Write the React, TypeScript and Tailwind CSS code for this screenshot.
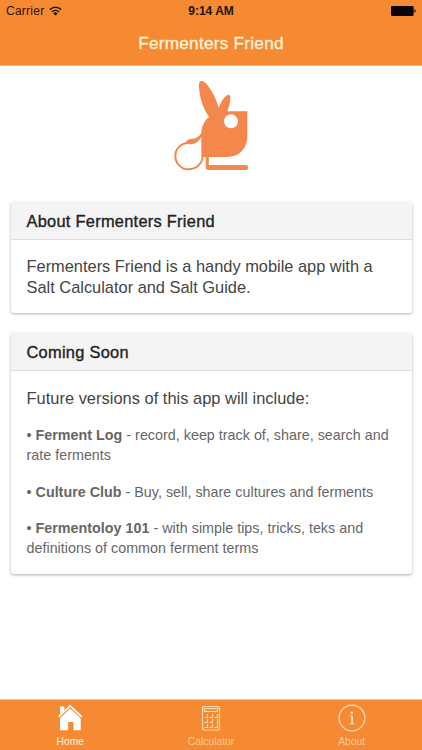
import type { ReactNode } from "react";

function WifiIcon() {
  return (
    <svg className="h-[10px] w-[13px]" viewBox="0 0 13 10" fill="none" aria-hidden="true">
      <path d="M.8 3.6a8.2 8.2 0 0 1 11.4 0" stroke="#1f1208" strokeWidth="1.5" />
      <path d="M2.9 5.9a5.2 5.2 0 0 1 7.2 0" stroke="#1f1208" strokeWidth="1.4" />
      <path d="M6.5 9.6 4.3 7.4a3.2 3.2 0 0 1 4.4 0Z" fill="#1f1208" />
    </svg>
  );
}

function BatteryIcon() {
  return (
    <svg className="h-[10px] w-[25px]" viewBox="0 0 25 10" fill="#0b0603" aria-hidden="true">
      <rect width="22.6" height="10" rx="1.2" />
      <path d="M23.3 3.3c1.8.3 1.8 3.1 0 3.4Z" />
    </svg>
  );
}

function Logo() {
  return (
    <svg className="h-[105px] w-[100px]" viewBox="0 0 300 315" fill="none" aria-hidden="true">
      <g fill="#f4874b">
        <path d="M122 28c7-3 15 4 23 15 14 19 25 42 31 65 5-15 13-29 23-37 8-6 13-2 12 8-1 14-4 27-9 39h60v75c0 38-25 62-61 62h-77v-69c0-21 8-39 23-51-14-22-25-47-28-73-2-13-4-31 2-34Z" />
        <path d="M127 178c-5 10-11 17-20 21-8 2-21 1-28 8-1 4 1 8 5 9 12 2 22 0 30-8 6-6 10-12 13-19Z" />
      </g>
      <path
        d="M84 213c-22 1-38 17-38 39 0 22 17 40 39 40s42-15 43-40"
        stroke="#f4874b"
        strokeWidth="6"
      />
      <path d="M142 253v33" stroke="#f4874b" strokeWidth="9" />
      <path d="M137.500 279H257a7 7 0 0 1 0 15H146q-8.500 0-8.500-8Z" fill="#f4874b" />
      <circle cx="213" cy="148" r="21" fill="#fff" />
    </svg>
  );
}

function HomeIcon() {
  return (
    <svg className="h-7 w-7" viewBox="0 0 28 28" aria-hidden="true">
      <path d="M4 10V2.500h4.300V6.500Z" fill="#fff" />
      <path d="m2.500 12.800 11.700-11 11.700 11" stroke="#fff" strokeWidth="1.700" fill="none" />
      <path d="M14.200 4.600 24.700 14.300v11.900h-7.200v-8.200h-5.400v8.200H4V14.300Z" fill="#fff" />
    </svg>
  );
}

function CalculatorIcon() {
  return (
    <svg className="h-7 w-7" viewBox="0 0 28 28" fill="none" stroke="#fcd8ad" aria-hidden="true">
      <rect x="5.500" y="2.500" width="17" height="23.500" rx="1.400" strokeWidth="1.200" />
      <rect x="7.500" y="4.500" width="13" height="3" strokeWidth="1.100" />
      <path
        d="M7.500 13.500h3v-3.500M12.500 13.500h3v-3.500M17.500 13.500h3v-3.500M7.500 18.500h3v-3.500M12.500 18.500h3v-3.500M7.500 23.500h3v-3.500M12.500 23.500h3v-3.500M17.500 23.500h3v-8.500"
        strokeWidth="1.100"
      />
    </svg>
  );
}

function AboutIcon() {
  return (
    <svg className="h-7 w-7" viewBox="0 0 28 28" fill="none" aria-hidden="true">
      <circle cx="14" cy="14" r="12.900" stroke="#fde3c4" strokeWidth="1.100" />
      <circle cx="13.800" cy="8.900" r="1.300" fill="#fde3c4" />
      <path d="M11.900 12h2.100v7.700M11.700 19.800h4.500" stroke="#fde3c4" strokeWidth="1" />
      <path d="M14 12v7.700" stroke="#fde3c4" strokeWidth="1.800" />
    </svg>
  );
}

function Card({ title, children }: { title: string; children: ReactNode }) {
  return (
    <section className="overflow-hidden rounded-[3px] bg-white shadow-[0_1px_3px_rgba(0,0,0,0.32)]">
      <div className="flex h-[38px] items-center border-b border-[#dedede] bg-[#f4f4f4] px-4 pt-[2px]">
        <h2 className="text-[16.4px] tracking-[0.27px] text-[#222] [-webkit-text-stroke:0.35px_#222]">
          {title}
        </h2>
      </div>
      <div className="px-4 pt-4">{children}</div>
    </section>
  );
}

const tabs = [
  { icon: <HomeIcon />, label: "Home", color: "text-[#fff3e0]" },
  { icon: <CalculatorIcon />, label: "Calculator", color: "text-[#fbcb98]" },
  { icon: <AboutIcon />, label: "About", color: "text-[#fbcb98]" },
];

export default function App() {
  return (
    <div className="flex h-[750px] w-[422px] flex-col bg-white font-['Liberation_Sans',sans-serif]">
      <header className="h-[66px] border-b border-[#f9b77f] bg-[#f68a32]">
        <div className="flex h-[22px] items-center justify-between px-[6px] text-[#1f1208]">
          <div className="flex flex-1 items-center gap-[5px] text-[12px] tracking-[0.25px]">
            <span>Carrier</span>
            <WifiIcon />
          </div>
          <span className="text-[12px] font-bold">9:14 AM</span>
          <div className="flex flex-1 justify-end">
            <BatteryIcon />
          </div>
        </div>
        <h1 className="flex h-[43px] items-center justify-center text-[17.2px] tracking-[0.25px] text-[#fff3dc] [-webkit-text-stroke:0.3px_#fff3dc]">
          Fermenters Friend
        </h1>
      </header>

      <main className="flex-1 px-[10.5px]">
        <div className="flex h-[136px] justify-center pt-[6px] pr-[2px]">
          <Logo />
        </div>

        <div className="flex flex-col gap-5">
          <Card title="About Fermenters Friend">
            <p className="pb-4 text-[16.4px] leading-[20.5px] text-[#444]">
              Fermenters Friend is a handy mobile app with a
              <br />
              Salt Calculator and Salt Guide.
            </p>
          </Card>

          <Card title="Coming Soon">
            <p className="pt-[0.6px] text-[16.4px] leading-[20.5px] tracking-[0.03px] text-[#444]">
              Future versions of this app will include:
            </p>
            <div className="space-y-4 pt-[16.6px] pb-[15.4px] text-[14.3px] leading-[20.4px] tracking-[0.02px] text-[#666]">
              <p>
                • <b>Ferment Log</b> - record, keep track of, share, search and
                <br />
                rate ferments
              </p>
              <p>
                • <b>Culture Club</b> - Buy, sell, share cultures and ferments
              </p>
              <p>
                • <b>Fermentoloy 101</b> - with simple tips, tricks, teks and
                <br />
                definitions of common ferment terms
              </p>
            </div>
          </Card>
        </div>
      </main>

      <nav className="grid h-[51px] grid-cols-3 border-t border-[#f9c79b] bg-[#f68a32]">
        {tabs.map((tab) => (
          <div key={tab.label} className={`flex flex-col items-center pt-[4px] ${tab.color}`}>
            {tab.icon}
            <span className="mt-[4px] text-[10.3px] leading-[12px]">{tab.label}</span>
          </div>
        ))}
      </nav>
    </div>
  );
}
